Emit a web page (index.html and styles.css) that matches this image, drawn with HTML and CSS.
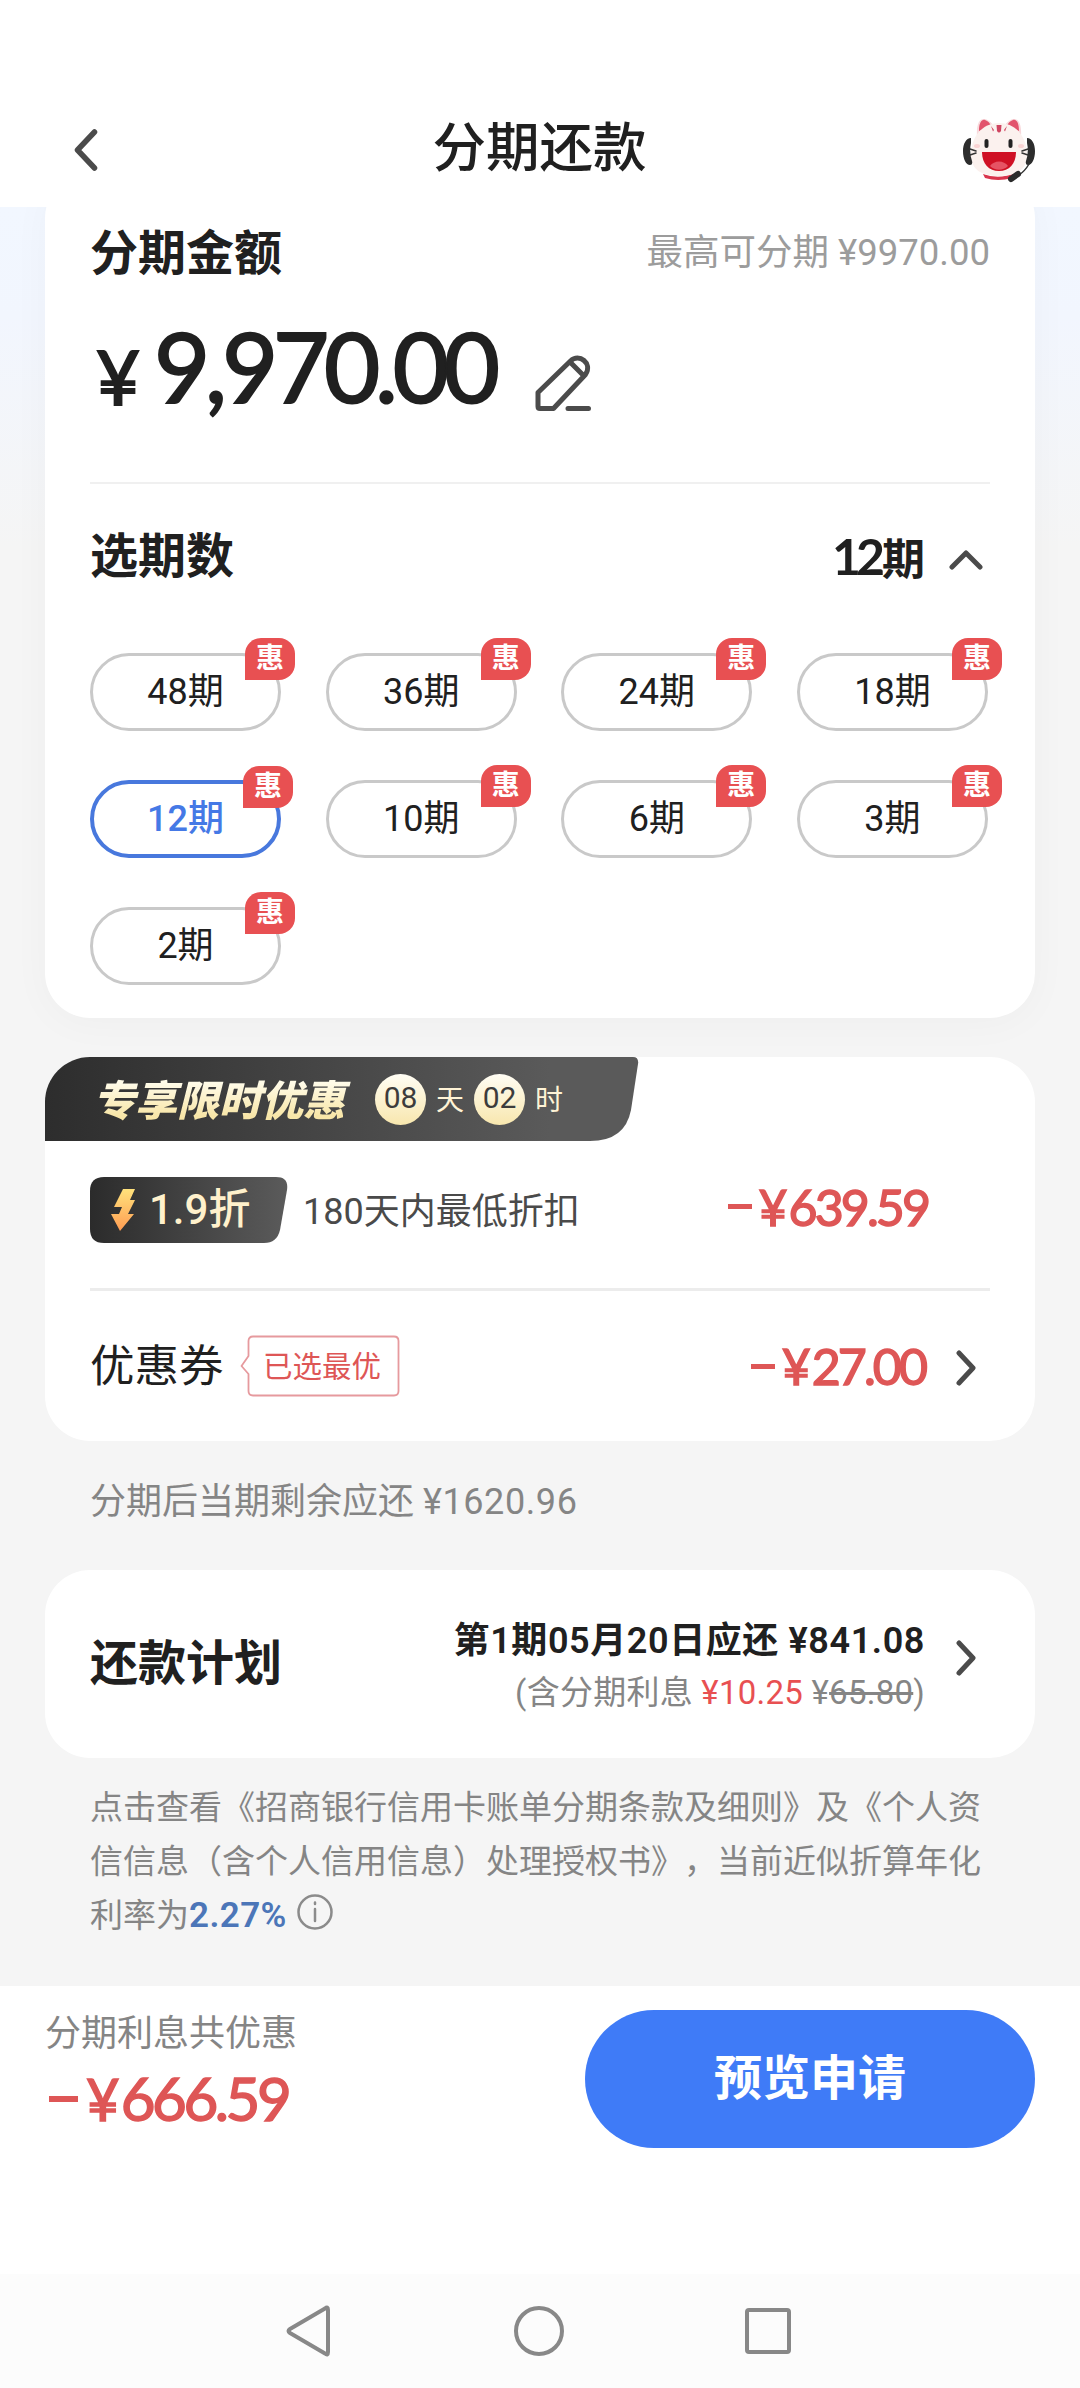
FILE: index.html
```html
<!DOCTYPE html>
<html lang="zh-CN">
<head>
<meta charset="utf-8">
<title>分期还款</title>
<link rel="stylesheet" href="styles.css">
</head>
<body>
<div class="screen">
  <header class="header">
    <svg class="back" width="24" height="44" viewBox="0 0 24 44"><path d="M20.500 4L3.500 22L20.500 40"/></svg>
    <h1 class="title">分期还款</h1>
    <svg class="mascot" width="74" height="66" viewBox="0 0 74 66">
      <path d="M15 20C14 6 18 1 23 2c4 1 8 5 9 8zM59 20C60 6 56 1 51 2c-4 1-8 5-9 8z" fill="#f8d9dc"/>
      <path d="M17 14C17 5 20 2 23 3c3 1 5 3 6 6zM57 14C57 5 54 2 51 3c-3 1-5 3-6 6z" fill="#e2536c"/>
      <path d="M21 57Q37 63 53 56L50 61Q36 65 23 61z" fill="#d9344c"/>
      <path d="M37 6C54 6 65 20 65 38C65 53 54 59 37 59S9 53 9 38C9 20 20 6 37 6z" fill="#fbf1ee"/>
      <path d="M34.500 8h5l-.500 6q-2 3-4 0zM29 9l3 4-1 1.500zM45 9l-3 4 1 1.500z" fill="#cf4460"/>
      <rect x="22.500" y="22" width="4" height="9" rx="2" fill="#222"/><rect x="46.500" y="22" width="4" height="9" rx="2" fill="#222"/>
      <path d="M20 35H54C54 47 47 54 37 54S20 47 20 35z" fill="#cf1024"/>
      <path d="M28 49C32 43 42 43 46 49C41 54 33 54 28 49z" fill="#e65364"/>
      <ellipse cx="15" cy="29" rx="3" ry="2" fill="#f9d3d3"/><ellipse cx="59" cy="29" rx="3" ry="2" fill="#f9d3d3"/>
      <path d="M9 21C4 21 1 27 1 34C1 42 4 48 8 48Q11 48 10 44Q7 35 9 26zM65 21C70 21 73 27 73 34C73 42 70 48 66 48Q63 48 64 44Q67 35 65 26z" fill="#2d2d2d"/>
      <path d="M8 32L14 34M8 38L14 36M66 32L60 34M66 38L60 36M67 47Q63 54 57 58" stroke="#333" stroke-width="1.500" fill="none"/>
      <path d="M49 62L56 57" stroke="#2b2b2b" stroke-width="6" stroke-linecap="round"/>
    </svg>
  </header>

  <main class="content">
    <section class="card amount-card">
      <div class="row limit-row">
        <h2 class="heading">分期金额</h2>
        <span class="limit">最高可分期 ¥9970.00</span>
      </div>
      <div class="amount-row">
        <span class="yen">¥</span>
        <span class="num amount">9,970.00</span>
        <svg class="pencil" width="58" height="58" viewBox="0 0 58 58"><path d="M3 38.500L35.500 7C44-1 58 9 50.500 20.500L18.500 54.500H5Q3 54.500 3 52.500zM36.500 9.500L48.500 21.500M33 54.500H53.500"/></svg>
      </div>
      <div class="line thin"></div>
      <div class="row term-row">
        <h2 class="heading">选期数</h2>
        <div class="term-value"><span><b class="num">12</b>期</span>
          <svg width="34" height="20" viewBox="0 0 34 20"><path d="M3 17L17 3L31 17"/></svg>
        </div>
      </div>
      <div class="terms">
        <div class="term">48期<em>惠</em></div>
        <div class="term">36期<em>惠</em></div>
        <div class="term">24期<em>惠</em></div>
        <div class="term">18期<em>惠</em></div>
        <div class="term active">12期<em>惠</em></div>
        <div class="term">10期<em>惠</em></div>
        <div class="term">6期<em>惠</em></div>
        <div class="term">3期<em>惠</em></div>
        <div class="term">2期<em>惠</em></div>
      </div>
    </section>

    <section class="card offer-card">
      <div class="banner">
        <strong>专享限时优惠</strong>
        <span class="count">08</span><span class="unit">天</span><span class="count">02</span><span class="unit">时</span>
      </div>
      <div class="row discount-row">
        <div class="rate">
          <svg width="26" height="44" viewBox="0 0 26 44"><defs><linearGradient id="bolt" x2="0" y2="1"><stop stop-color="#ffe27c"/><stop offset="1" stop-color="#ff9c52"/></linearGradient></defs><path fill="url(#bolt)" d="M13 1H25L20 12H25L18 26H24L10 43L1 26H9L12 19H4z"/></svg>
          <span>1.9折</span>
        </div>
        <span class="rate-note">180天内最低折扣</span>
        <span class="num money"><s class="dash"></s><u>¥</u>639.59</span>
      </div>
      <div class="line"></div>
      <div class="row coupon-row">
        <span class="coupon">优惠券</span>
        <div class="tag">
          <svg width="160" height="62" viewBox="0 0 160 62"><path d="M8.500 21V6Q8.500 1.500 13 1.500H154Q158.500 1.500 158.500 6V56Q158.500 60.500 154 60.500H13Q8.500 60.500 8.500 56V39L1.500 31z"/></svg>
          <span>已选最优</span>
        </div>
        <span class="num money"><s class="dash"></s><u>¥</u>27.00</span>
        <svg class="chevron" width="20" height="36" viewBox="0 0 20 36"><path d="M3 3L17 18L3 33"/></svg>
      </div>
    </section>

    <p class="remaining">分期后当期剩余应还 <span>¥1620.96</span></p>

    <section class="card plan-card">
      <h2 class="heading">还款计划</h2>
      <div class="plan">
        <div class="plan-main">第1期05月20日应还 ¥841.08</div>
        <div class="plan-sub">(含分期利息 <span class="red">¥10.25</span> ¥<del>65.80</del>)</div>
      </div>
      <svg class="chevron" width="20" height="36" viewBox="0 0 20 36"><path d="M3 3L17 18L3 33"/></svg>
    </section>

    <p class="legal">点击查看《招商银行信用卡账单分期条款及细则》及《个人资<br>信信息（含个人信用信息）处理授权书》，当前近似折算年化<br>利率为<b>2.27%</b><svg width="38" height="38" viewBox="0 0 38 38"><circle cx="19" cy="19" r="16.500"/><path d="M19 16V28M19 9.500V11"/></svg></p>
  </main>

  <footer class="footer">
    <div class="saving">
      <div class="saving-label">分期利息共优惠</div>
      <div class="num money big"><s class="dash"></s><u>¥</u>666.59</div>
    </div>
    <button class="submit">预览申请</button>
  </footer>

  <nav class="nav">
    <svg width="50" height="56" viewBox="0 0 50 56"><path d="M44 7Q44 3 41 5.500L6 26Q3 28 6 30L41 50.500Q44 53 44 49z"/></svg>
    <svg width="56" height="56" viewBox="0 0 56 56"><circle cx="28" cy="28" r="23"/></svg>
    <svg width="50" height="56" viewBox="0 0 50 56"><rect x="4" y="7" width="42" height="42" rx="2"/></svg>
  </nav>
</div>
</body>
</html>
```
FILE: styles.css
```css
* { box-sizing: border-box; }
body { margin: 0; background: #fff; color: #202020; font-family: Roboto, "Noto Sans CJK SC", sans-serif; }
h1, h2, p { margin: 0; font-weight: 500; }
svg { display: block; flex: none; fill: none; stroke-linecap: round; stroke-linejoin: round; }
.screen { width: 1080px; height: 2388px; display: flex; flex-direction: column; overflow: hidden; }

.header { height: 207px; flex: none; padding: 94px 42px 0 74px; display: grid; grid-template: 112px / 76px 1fr 76px; align-items: center; }
.back { stroke: #4b4b4b; stroke-width: 5.500; }
.title { text-align: center; font-size: 53.500px; line-height: 70px; padding-bottom: 2px; margin-left: -33px; }
.mascot { justify-self: end; margin-right: 2px; }

.content { height: 1779px; flex: none; overflow: hidden; padding: 0 45px; background: linear-gradient(#f2f7ff 0, #f2f6fe 110px, #f5f5f5 340px); }
.card { background: #fff; border-radius: 45px; }
.row { display: flex; align-items: center; }
.heading { font-size: 48px; line-height: 60px; font-weight: 700; padding-top: 2px; }
.line { height: 3px; margin: 0 45px; background: #ececec; }
.line.thin { height: 2px; margin: 0; background: #f0f0f0; }
.num { font-family: Lato, "Noto Sans CJK SC", sans-serif; font-variant-numeric: tabular-nums; }

.amount-card { margin-top: -34px; height: 845px; padding: 50px 45px 0; box-shadow: 0 5px 40px rgba(0,0,0,.03); }
.limit-row { height: 60px; justify-content: space-between; }
.limit { color: #9c9c9c; font-size: 36.500px; line-height: 50px; }
.amount-row { height: 199px; padding-bottom: 33px; display: flex; align-items: center; line-height: 120px; }
.yen { font: 76px/90px Lato, sans-serif; -webkit-text-stroke: 2px #202020; margin: 19px 0 0 6px; width: 58px; }
.amount { font-size: 97px; letter-spacing: -5.200px; -webkit-text-stroke: 2px #202020; width: 343px; }
.pencil { margin: 34px 0 0 38px; stroke: #4b4b4b; stroke-width: 5; }
.term-row { height: 144px; justify-content: space-between; }
.term-value { display: flex; align-items: center; font-size: 43px; font-weight: 700; line-height: 60px; }
.term-value span { padding-top: 3px; }
.term-value b { font-size: 50px; font-weight: 700; letter-spacing: -5px; margin-right: 2px; }
.term-value svg { margin: 8px 7px 0 24px; stroke: #4b4b4b; stroke-width: 5; }
.terms { margin: 25px 2px 0 0; display: grid; grid-template-columns: repeat(4, 191px); grid-auto-rows: 78px; row-gap: 49px; justify-content: space-between; }
.term { position: relative; border: 3px solid #c9c9c9; border-radius: 39px; text-align: center; font-size: 36px; line-height: 73px; }
.term.active { border: 4px solid #4878dd; color: #4579e6; font-weight: 500; line-height: 71px; }
.term em { position: absolute; top: -18px; right: -17px; width: 50px; height: 42px; border-radius: 16px 16px 16px 0; background: #e85052; color: #fff; font: 700 28px/37px "Noto Sans CJK SC", sans-serif; }
.term.active em { top: -18px; right: -16px; }

.offer-card { margin-top: 39px; height: 384px; overflow: hidden; }
.banner { width: 594px; height: 84px; padding-left: 48px; display: flex; align-items: center; background: linear-gradient(90deg, #2d2d2d, #5a5a5a 85%); clip-path: path("M0 0H588Q594 0 593 7L586 53Q580 84 545 84H0z"); color: #fff3d6; }
.banner strong { width: 282px; font: italic 900 42px/60px "Noto Sans CJK SC", sans-serif; background: linear-gradient(#fffbe8 25%, #f8e6a8 80%); -webkit-background-clip: text; color: transparent; margin-top: -3px; }
.count { width: 51px; height: 51px; border-radius: 50%; background: linear-gradient(#fffdf4, #f8e7ae); color: #3c3c3c; text-align: center; font-size: 30px; line-height: 48px; }
.unit { width: 48px; text-align: center; font-size: 28px; line-height: 40px; padding-top: 3px; }
.discount-row { height: 147px; padding: 0 45px 9px; }
.rate { width: 198px; height: 66px; padding-left: 20px; display: flex; align-items: center; background: linear-gradient(90deg, #2b2b2b, #5b5b5b); clip-path: path("M14 0H186Q199 0 197 13L190 53Q187 66 174 66H14Q0 66 0 52V14Q0 0 14 0z"); color: #fff1cc; font-size: 42px; font-weight: 500; line-height: 60px; }
.rate span { margin-left: 13px; }
.rate-note { margin: 4px 0 0 15px; font-size: 36px; line-height: 50px; color: #4a4a4a; }
.money { display: flex; align-items: baseline; margin-left: auto; color: #de5656; font-size: 50px; line-height: 60px; letter-spacing: -2.900px; -webkit-text-stroke: 1.500px #de5656; }
.money u { text-decoration: none; font-size: 50px; letter-spacing: 0; margin-right: 1px; }
.dash { width: 24px; height: 5px; margin-right: 7px; background: #de5656; align-self: center; }
.discount-row .money { margin-right: 62px; margin-top: -7px; }
.coupon-row { height: 150px; padding: 0 45px; }
.coupon { font-size: 44.500px; line-height: 60px; width: 150px; padding-top: 2px; }
.tag { width: 160px; height: 62px; display: grid; color: #de5656; font-size: 29.500px; line-height: 64px; }
.tag > * { grid-area: 1 / 1; }
.tag svg { stroke: #e69a9e; stroke-width: 1.800; }
.tag span { padding-left: 23px; }
.chevron { stroke: #4b4b4b; stroke-width: 5; margin: 3px 14px 0 31px; }

.remaining { height: 129px; padding: 34px 45px 0; color: #858585; font-size: 36px; line-height: 54px; font-weight: 400; }
.remaining span { letter-spacing: .600px; }
.plan-card { height: 188px; padding: 0 45px; display: flex; align-items: center; }
.plan-card .heading { padding-top: 0; }
.plan { margin-left: auto; text-align: right; padding-top: 5px; }
.plan-main { font-size: 36px; line-height: 52px; font-weight: 600; letter-spacing: .600px; }
.plan-sub { color: #858585; font-size: 33px; line-height: 52px; letter-spacing: .250px; }
.red { color: #e85052; }
.plan-card .chevron { margin-top: -12px; }
.legal { margin-top: 23px; padding: 0 45px; font-size: 33px; line-height: 54px; color: #858585; font-weight: 400; white-space: nowrap; text-spacing-trim: space-all; }
.legal b { color: #4c76b8; font-weight: 600; font-size: 35px; letter-spacing: .400px; }
.legal svg { display: inline-block; vertical-align: -4px; margin-left: 9px; stroke: #8b8b8b; stroke-width: 2.500; }

.footer { height: 288px; flex: none; padding: 24px 45px 0; display: flex; justify-content: space-between; align-items: flex-start; }
.saving-label { color: #858585; font-size: 36px; line-height: 48px; }
.big { font-size: 60px; line-height: 80px; padding-left: 4px; letter-spacing: -3.400px; }
.big u { font-size: 58px; }
.big .dash { width: 29px; height: 6px; margin-right: 8px; }
.submit { width: 450px; height: 138px; padding: 0; border: 0; border-radius: 69px; background: #3f7bf7; color: #fff; font: 700 48px/70px Roboto, "Noto Sans CJK SC", sans-serif; }
.nav { height: 114px; flex: none; padding: 0 287px 0 284px; display: flex; justify-content: space-between; align-items: center; background: #fcfcfc; }
.nav svg { stroke: #888; stroke-width: 4; }
```
